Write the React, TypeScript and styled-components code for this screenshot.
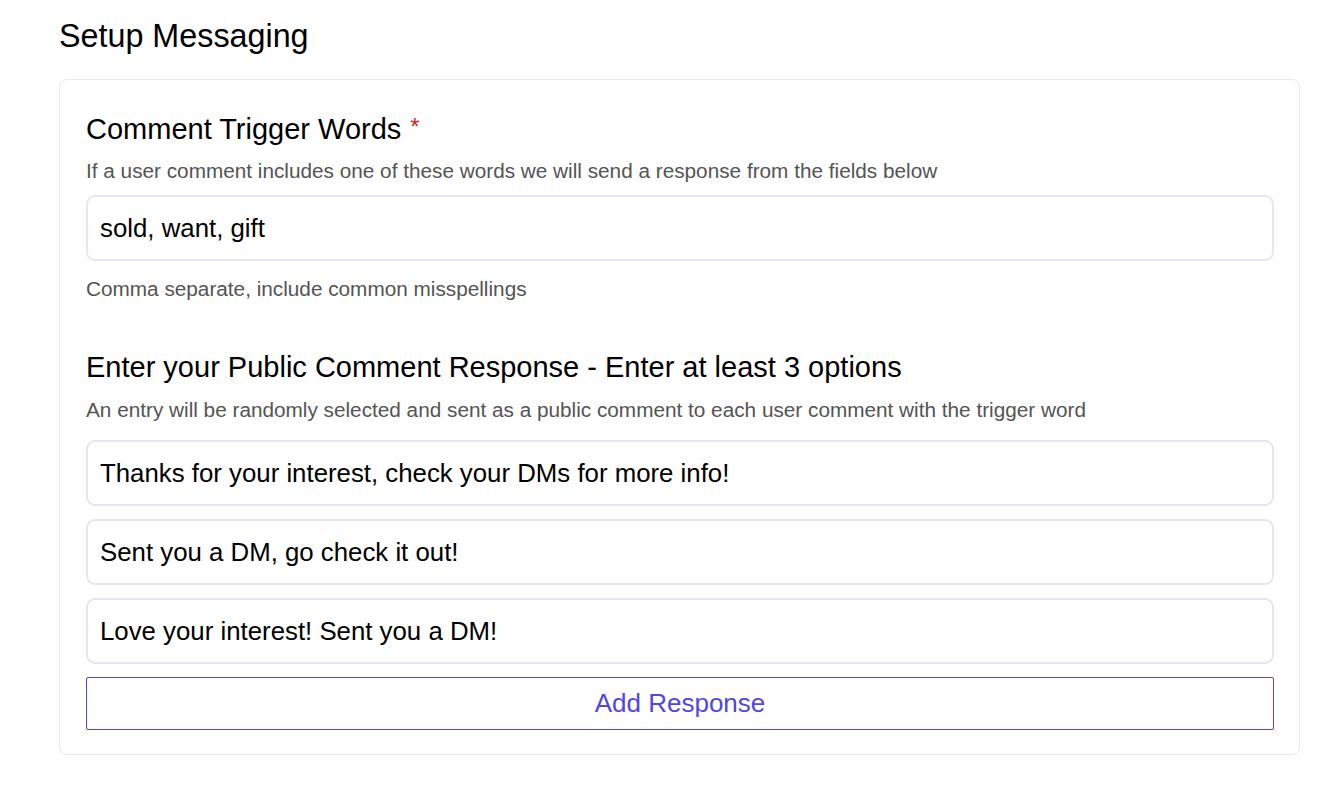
import styled, { createGlobalStyle } from "styled-components";

const GlobalStyle = createGlobalStyle`
  html, body {
    margin: 0;
    padding: 0;
    background: #ffffff;
    font-family: "Liberation Sans", Arial, Helvetica, sans-serif;
    color: #000000;
  }
`;

const Page = styled.div`
  padding: 18px 40px 40px 59px;
`;

const Title = styled.h1`
  margin: 0;
  font-size: 32.3px;
  line-height: 37px;
  font-weight: 400;
`;

const Card = styled.div`
  margin-top: 24px;
  border: 1px solid #ebebeb;
  border-radius: 8px;
  padding: 32px 25px 24px 26px;
  display: flex;
  flex-direction: column;
`;

const SectionHeading = styled.h2<{ $spaced?: boolean }>`
  margin: ${(p) => (p.$spaced ? "48px" : "0")} 0 0;
  font-size: 29px;
  line-height: 34px;
  font-weight: 400;
`;

const Required = styled.span`
  color: #e02424;
  font-size: 24px;
  vertical-align: top;
  margin-left: 9px;
  position: relative;
  top: -2px;
`;

const Hint = styled.p<{ $gap: number }>`
  margin: ${(p) => p.$gap}px 0 0;
  font-size: 20.75px;
  line-height: 26px;
  color: #545454;
`;

const TextField = styled.input`
  box-sizing: border-box;
  width: 100%;
  height: 66px;
  border: 2px solid #e4e7f0;
  border-radius: 9px;
  padding: 0 12px;
  font-family: inherit;
  font-size: 25.8px;
  color: #000000;
  background: #ffffff;
  outline: none;
`;

const TriggerField = styled(TextField)`
  margin-top: 11px;
`;

const ResponseList = styled.div`
  margin-top: 17px;
  display: flex;
  flex-direction: column;
  gap: 13px;
`;

const AddButton = styled.button`
  margin-top: 13px;
  height: 53px;
  width: 100%;
  border: 1px solid #4f46e5;
  border-radius: 2px;
  background: #ffffff;
  color: #4f46e5;
  font-family: inherit;
  font-size: 26px;
  cursor: pointer;
`;

const responses = [
  "Thanks for your interest, check your DMs for more info!",
  "Sent you a DM, go check it out!",
  "Love your interest! Sent you a DM!",
];

const App = () => {
  return (
    <>
      <GlobalStyle />
      <Page>
        <Title>Setup Messaging</Title>
        <Card>
          <SectionHeading>
            Comment Trigger Words<Required>*</Required>
          </SectionHeading>
          <Hint $gap={12}>
            If a user comment includes one of these words we will send a
            response from the fields below
          </Hint>
          <TriggerField defaultValue="sold, want, gift" />
          <Hint $gap={15}>Comma separate, include common misspellings</Hint>

          <SectionHeading $spaced>
            Enter your Public Comment Response - Enter at least 3 options
          </SectionHeading>
          <Hint $gap={13}>
            An entry will be randomly selected and sent as a public comment to
            each user comment with the trigger word
          </Hint>
          <ResponseList>
            {responses.map((text) => (
              <TextField key={text} defaultValue={text} />
            ))}
          </ResponseList>
          <AddButton>Add Response</AddButton>
        </Card>
      </Page>
    </>
  );
};

export default App;
